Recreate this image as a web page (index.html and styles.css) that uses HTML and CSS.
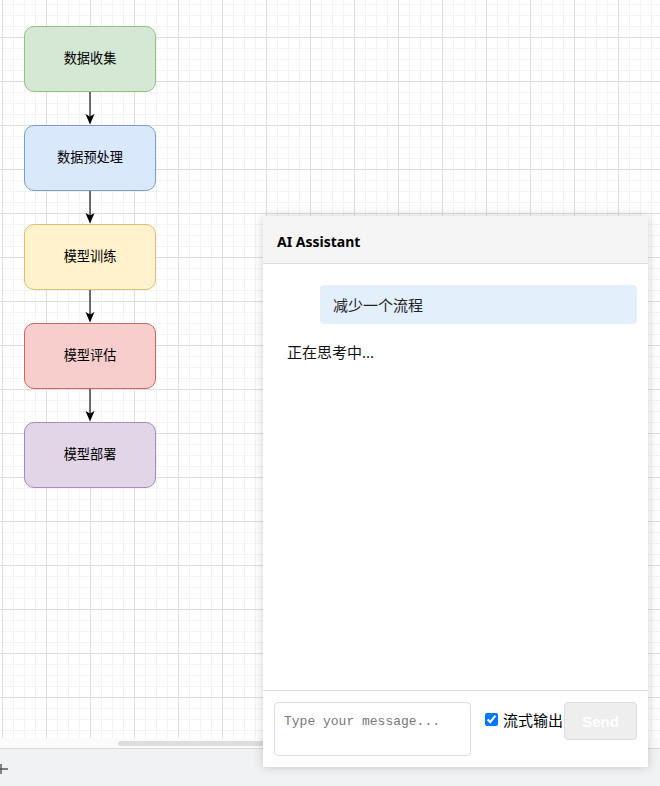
FILE: index.html
```html
<!DOCTYPE html>
<html lang="zh-CN">
<head>
<meta charset="utf-8">
<title>Flow Editor</title>
<link rel="stylesheet" href="styles.css">
</head>
<body>
<div class="app">
  <div class="canvas">
    <div class="flow">
      <div class="node green">数据收集</div>
      <svg class="arrow" width="12" height="33" viewBox="0 0 12 33"><line x1="6" y1="0" x2="6" y2="26" stroke="#000" stroke-width="1.1"/><path d="M6 32.5 L1.5 22 L6 24.6 L10.5 22 Z" fill="#000"/></svg>
      <div class="node blue">数据预处理</div>
      <svg class="arrow" width="12" height="33" viewBox="0 0 12 33"><line x1="6" y1="0" x2="6" y2="26" stroke="#000" stroke-width="1.1"/><path d="M6 32.5 L1.5 22 L6 24.6 L10.5 22 Z" fill="#000"/></svg>
      <div class="node yellow">模型训练</div>
      <svg class="arrow" width="12" height="33" viewBox="0 0 12 33"><line x1="6" y1="0" x2="6" y2="26" stroke="#000" stroke-width="1.1"/><path d="M6 32.5 L1.5 22 L6 24.6 L10.5 22 Z" fill="#000"/></svg>
      <div class="node red">模型评估</div>
      <svg class="arrow" width="12" height="33" viewBox="0 0 12 33"><line x1="6" y1="0" x2="6" y2="26" stroke="#000" stroke-width="1.1"/><path d="M6 32.5 L1.5 22 L6 24.6 L10.5 22 Z" fill="#000"/></svg>
      <div class="node purple">模型部署</div>
    </div>
  </div>
  <div class="hscroll"><div class="thumb"></div></div>
  <div class="toolbar">
    <svg class="plus" width="12" height="12" viewBox="0 0 12 12"><path d="M0 6 H10 M3 1 V11" stroke="#555" stroke-width="1.4" fill="none"/></svg>
  </div>

  <div class="panel">
    <div class="panel-header">AI Assistant</div>
    <div class="messages">
      <div class="msg user">减少一个流程</div>
      <div class="msg bot">正在思考中...</div>
    </div>
    <div class="input-row">
      <textarea class="input" placeholder="Type your message..."></textarea>
      <label class="stream"><input type="checkbox" checked>流式输出</label>
      <button class="send" disabled>Send</button>
    </div>
  </div>
</div>
</body>
</html>
```

FILE: styles.css
```css
html, body {
  margin: 0;
  padding: 0;
}
body {
  font-family: "Noto Sans", "Noto Sans CJK SC", sans-serif;
  color: #000;
  width: 660px;
  height: 786px;
  overflow: hidden;
}
.app {
  position: relative;
  width: 660px;
  height: 786px;
  display: flex;
  flex-direction: column;
}
.canvas {
  height: 738px;
  flex: none;
  background-color: #fff;
  background-image:
    linear-gradient(to right, #dedede 1px, transparent 1px),
    linear-gradient(to bottom, #dedede 1px, transparent 1px),
    linear-gradient(to right, #f3f3f3 1px, transparent 1px),
    linear-gradient(to bottom, #f3f3f3 1px, transparent 1px);
  background-size: 44px 44px, 44px 44px, 11px 11px, 11px 11px;
  background-position: 2px 37px, 2px 37px, 2px 37px, 2px 37px;
}
.flow {
  display: flex;
  flex-direction: column;
  align-items: center;
  width: 132px;
  padding: 26px 0 0 24px;
}
.node {
  box-sizing: border-box;
  width: 132px;
  height: 66px;
  border: 1px solid;
  border-radius: 10px;
  display: flex;
  align-items: center;
  justify-content: center;
  padding-bottom: 3px;
  font-family: "Liberation Sans", "Noto Sans CJK SC", sans-serif;
  font-size: 13.2px;
}
.arrow { display: block; }
.green { background: #d5e8d4; border-color: #93bf83; }
.blue { background: #dae8fc; border-color: #7e9cca; }
.yellow { background: #fff2cc; border-color: #dcc06e; }
.red { background: #f8cecc; border-color: #c26a66; }
.purple { background: #e1d5e7; border-color: #a68aba; }

.hscroll {
  height: 10px;
  flex: none;
  background: #fbfbfb;
  position: relative;
}
.thumb {
  margin: 3px 0 0 118px;
  width: 200px;
  height: 5px;
  border-radius: 3px;
  background: #dddddd;
}
.toolbar {
  flex: 1;
  background: #f1f2f4;
  border-top: 1px solid #d9d9d9;
  display: flex;
  align-items: center;
}
.plus {
  display: block;
  margin-left: -2px;
  margin-top: 2px;
}

.panel {
  position: absolute;
  left: 263px;
  top: 216px;
  width: 385px;
  height: 551px;
  background: #fff;
  box-shadow: 0 0 10px rgba(0, 0, 0, 0.18);
  display: flex;
  flex-direction: column;
}
.panel-header {
  height: 48px;
  flex: none;
  box-sizing: border-box;
  background: #f5f5f5;
  border-bottom: 1px solid #dddddd;
  display: flex;
  align-items: center;
  padding: 3px 0 0 14px;
  font-weight: 700;
  font-size: 14px;
}
.messages {
  flex: 1;
  padding: 11px 11px;
}
.msg {
  margin: 10px 0;
  font-size: 15px;
  line-height: 21px;
  border-radius: 4px;
}
.user {
  padding: 10px 13px 8px;
  background: #e3f0fc;
  margin-left: 46px;
  color: #222;
}
.bot {
  padding: 8px 13px;
  color: #111;
}
.input-row {
  flex: none;
  border-top: 1px solid #dddddd;
  padding: 11px;
  display: flex;
  align-items: flex-start;
}
.input {
  box-sizing: border-box;
  width: 197px;
  height: 54px;
  margin: 0 10px 0 0;
  border: 1px solid #dddddd;
  border-radius: 4px;
  padding: 11px 9px 6px;
  font-family: "Liberation Mono", monospace;
  font-size: 13px;
  resize: none;
  outline: none;
}
.input::placeholder {
  color: #777;
}
.stream {
  display: flex;
  align-items: center;
  font-size: 15px;
  margin-top: 7px;
  white-space: nowrap;
}
.stream input {
  margin: 0 5px 0 4px;
  width: 13px;
  height: 13px;
}
.send {
  box-sizing: border-box;
  width: 73px;
  height: 38px;
  margin-left: 1px;
  background: #eeeeee;
  border: 1px solid #dddddd;
  border-radius: 4px;
  color: #fff;
  font-family: "Liberation Sans", sans-serif;
  font-weight: 700;
  font-size: 15px;
}
```
